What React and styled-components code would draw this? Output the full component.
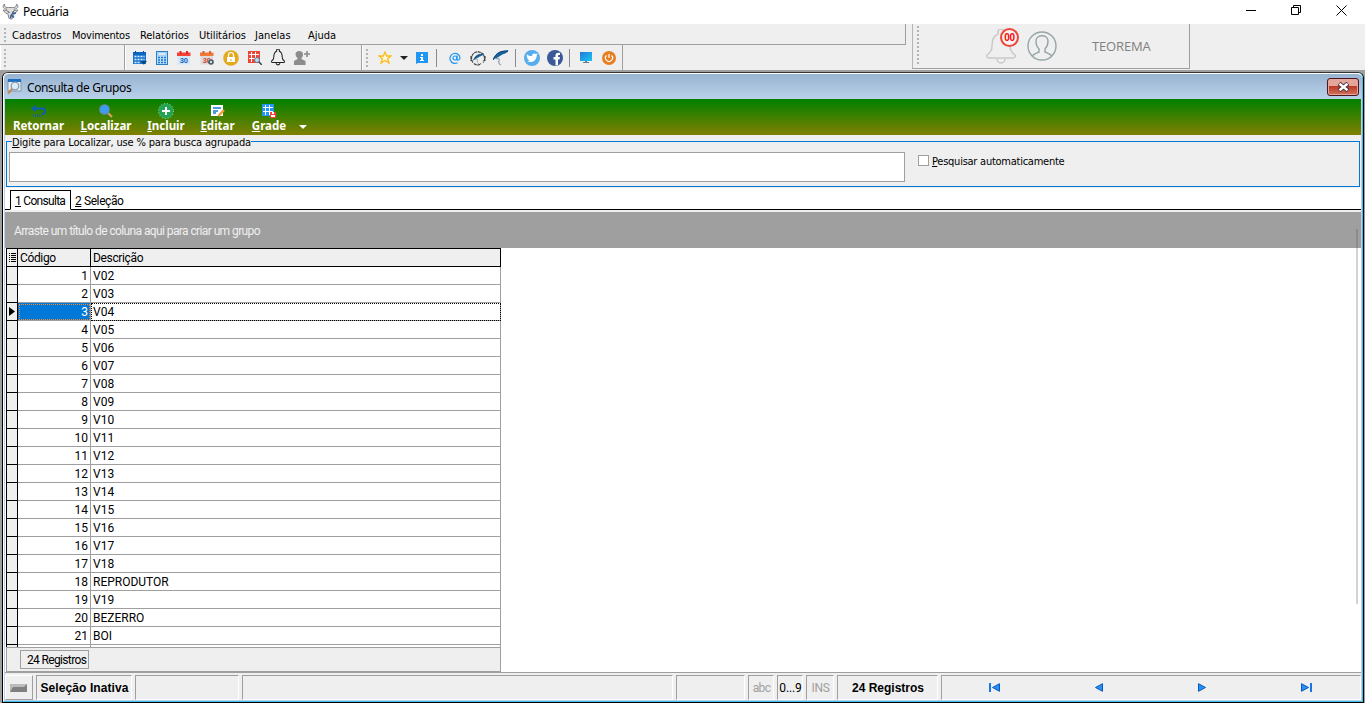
import styled, { createGlobalStyle } from "styled-components";

const GlobalStyle = createGlobalStyle`
    *{ box-sizing: border-box; }
    body{
        margin: 0;
        overflow: hidden;
        background: #9f9f9f;
        font-family: "DejaVu Sans Condensed", "DejaVu Sans", sans-serif;
        font-size: 11px;
        color: #000;
    }
    svg{ display: block; flex: none; }
    u{ text-underline-offset: 1px; text-decoration-thickness: 1px; }
`;

const Screen = styled.div`
    width: 1365px;
    height: 703px;
    display: flex;
    flex-direction: column;
    overflow: hidden;
`;

const Label = styled.span`
    font-family: ${props => props.$font || "inherit"};
    font-size: ${props => props.$size || 11}px;
    font-weight: ${props => props.$bold ? 700 : 400};
    letter-spacing: ${props => props.$track || 0}px;
    color: ${props => props.$color || "inherit"};
    white-space: nowrap;
`;

const TitleBar = styled.header`
    height: 24px;
    background: #fff;
    display: flex;
    align-items: center;
    padding: 0 18px 2px 2px;
    gap: 4px;
`;

const WindowButtons = styled.div`
    margin-left: auto;
    display: flex;
    gap: 34px;
    align-items: center;
    padding: 0 0 1px;
`;

const Docks = styled.div`
    height: 46px;
    flex: none;
    background: #efefef;
    display: flex;
`;

const LeftDock = styled.div`
    width: 906px;
`;

const MenuBar = styled.nav`
    height: 21px;
    display: flex;
    align-items: center;
    padding: 2px 0 0 4px;
    border-right: 1px solid #9f9f9f;
    border-bottom: 1px solid #9f9f9f;
`;

const Grip = styled.i`
    width: 2px;
    height: ${props => props.$height}px;
    flex: none;
    background: repeating-linear-gradient(#b4b4b4 0 2px, transparent 2px 4px);
`;

const MenuItem = styled.span`
    width: ${props => props.$width}px;
    padding-left: 6px;
    flex: none;
    white-space: nowrap;
    letter-spacing: ${props => props.$track || 0}px;
`;

const ToolRow = styled.div`
    height: 25px;
    display: flex;
`;

const ToolStrip = styled.div`
    width: ${props => props.$width}px;
    padding-left: ${props => props.$pad || 0}px;
    border-right: 1px solid #9f9f9f;
    border-left: 1px solid #fff;
    display: flex;
    align-items: center;
    gap: ${props => props.$gap || 0}px;
`;

const Separator = styled.i`
    width: 1px;
    height: 18px;
    background: #8a8a8a;
    margin: 0 ${props => props.$after}px 0 ${props => props.$before}px;
`;

const Space = styled.i`
    width: ${props => props.$width}px;
    flex: none;
`;

const UserDock = styled.div`
    width: 278px;
    height: 45px;
    margin-left: 6px;
    padding-left: 4px;
    display: flex;
    align-items: center;
    border: 1px solid #9f9f9f;
    border-top: 0;
    border-left-color: #b5b5b5;
`;

const BellBox = styled.div`
    position: relative;
    margin-left: 67px;
    padding-top: 2px;
`;

const Badge = styled.span`
    position: absolute;
    top: 1px;
    left: 14px;
    width: 19px;
    height: 19px;
    border: 2px solid #ef4638;
    border-radius: 50%;
    background: #f4f2f2;
    color: #f00;
    font: 700 10px/15px "Liberation Sans", sans-serif;
    letter-spacing: -0.4px;
    text-align: center;
`;

const Child = styled.main`
    height: 633px;
    border-top: 2px solid #9f9f9f;
    border-left: 2px solid #9f9f9f;
    border-right: 1px solid #9f9f9f;
    display: flex;
`;

const Frame = styled.div`
    flex: 1;
    min-width: 0;
    border: 1px solid #000;
    border-top-color: #333;
    border-radius: 6px 6px 0 0;
    background: #fff;
    display: flex;
`;

const Inner = styled.div`
    flex: 1;
    min-width: 0;
    border: solid #3ec0ea;
    border-width: 0 1px 1px 0;
    border-radius: 5px 5px 0 0;
    border-left: 1px solid #fff;
    padding: 0 1px 1px;
    background: #b9d1ea;
    display: flex;
    flex-direction: column;
`;

const ChildTitle = styled.div`
    height: 26px;
    flex: none;
    border-top: 1px solid #fff;
    border-radius: 5px 5px 0 0;
    margin: 0 -1px;
    background: linear-gradient(#99b4d1, #b9d1ea);
    display: flex;
    align-items: center;
    padding: 1px 3px 0;
    gap: 5px;
`;

const CloseButton = styled.button`
    width: 32px;
    height: 18px;
    margin-left: auto;
    padding: 0;
    border: 1px solid #4c1620;
    border-radius: 3px;
    box-shadow: inset 0 0 0 1px #e2a69b;
    background: linear-gradient(#e6a59b 0 45%, #b93a25 46%, #d4735e);
    display: grid;
    place-items: center;
`;

const ActionBar = styled.div`
    height: 36px;
    flex: none;
    background: linear-gradient(#008000, #808000);
    display: flex;
    color: #fff;
`;

const Action = styled.div`
    width: ${props => props.$width}px;
    display: flex;
    flex-direction: column;
    align-items: center;
    padding-top: 4px;
    font: 700 11.5px/14px "Noto Sans", sans-serif;
    white-space: nowrap;
    .icon{
        height: 16px;
        display: grid;
        place-items: center;
    }
`;

const SearchPane = styled.div`
    height: 53px;
    flex: none;
    background: #efefef;
    padding: 0 1px;
`;

const Group = styled.fieldset`
    height: 52px;
    margin: 0;
    padding: 0 2px;
    min-width: 0;
    border: 1px solid #0078d7;
    display: flex;
    gap: 13px;
`;

const Legend = styled.legend`
    padding: 0;
    margin-left: 3px;
    height: 13px;
    line-height: 15px;
    letter-spacing: -0.16px;
`;

const SearchInput = styled.input`
    width: 896px;
    height: 30px;
    margin-top: 4px;
    padding: 0 4px;
    border: 1px solid #9f9f9f;
    background: #fff;
`;

const Check = styled.label`
    display: flex;
    height: 13px;
    margin-top: 6px;
    gap: 3px;
    line-height: 15px;
    letter-spacing: -0.25px;
    white-space: nowrap;
    i{
        width: 11px;
        height: 11px;
        margin-top: 1px;
        border: 1px solid #9f9f9f;
        background: #fff;
    }
`;

const Tabs = styled.div`
    height: 22px;
    flex: none;
    background: #fff;
    border-bottom: 1px solid #000;
    display: flex;
    padding: 2px 0 0 5px;
    font-family: Roboto, sans-serif;
    font-size: 12px;
`;

const Tab = styled.div`
    height: 20px;
    line-height: ${props => props.$active ? 20 : 22}px;
    padding: 0 4px;
    letter-spacing: -0.4px;
    white-space: nowrap;
    ${props => props.$active && `
        width: 61px;
        border: 1px solid #000;
        border-bottom-color: #fff;
        letter-spacing: -0.7px;
    `}
`;

const Grid = styled.section`
    height: 463px;
    flex: none;
    position: relative;
    background: #fff;
    border-top: 2px solid #efefef;
    border-bottom: 1px solid #9f9f9f;
    font-family: Roboto, sans-serif;
    font-size: 12px;
`;

const GroupBy = styled.div`
    height: 36px;
    line-height: 38px;
    padding-left: 9px;
    background: #9f9f9f;
    color: #efefef;
    letter-spacing: -0.64px;
    word-spacing: 0.2px;
`;

const ScrollThumb = styled.i`
    position: absolute;
    right: 3px;
    top: 17px;
    width: 2px;
    height: 375px;
    background: rgba(80, 80, 80, 0.25);
`;

const Table = styled.div`
    width: 495px;
    margin-left: 1px;
    height: 399px;
    overflow: hidden;
`;

const Row = styled.div`
    height: 18px;
    display: grid;
    grid-template-columns: 12px 73px 1fr;
    grid-template-rows: 100%;
    line-height: 18px;
`;

const Indicator = styled.span`
    background: #efefef;
    border: solid #000;
    border-width: 0 1px 1px;
    display: grid;
    place-items: center;
`;

const HeadRow = styled(Row)`
    height: 19px;
    background: #efefef;
    border: solid #000;
    border-width: 1px 0;
    letter-spacing: -0.35px;
    >span{
        border-right: 1px solid #000;
        padding-left: 2px;
    }
    ${Indicator}{
        border-bottom: 0;
        padding: 0;
    }
`;

const Cell = styled.span`
    border: solid #9f9f9f;
    border-width: 0 1px 1px 0;
    padding: 0 2px;
    text-align: ${props => props.$right ? "right" : "left"};
    ${props => props.$selected && (props.$right
        ? "background: #0078d7; color: #fff; outline: 1px dotted #ff8728; outline-offset: -2px;"
        : "outline: 1px dotted #000; outline-offset: -1px;")}
`;

const Footer = styled.div`
    width: 495px;
    height: 25px;
    margin-left: 1px;
    background: #efefef;
    border: 1px solid #9f9f9f;
    padding: 2px 0 0 13px;
    >div{
        width: 69px;
        height: 19px;
        border: 1px solid #9f9f9f;
        line-height: 18px;
        padding-left: 6px;
        white-space: nowrap;
        letter-spacing: -0.65px;
    }
`;

const StatusBar = styled.footer`
    flex: 1;
    background: #efefef;
    display: flex;
    padding: 2px 0 0;
    gap: 3px;
`;

const Panel = styled.div`
    width: ${props => props.$width}px;
    height: 25px;
    flex: none;
    border: 1px solid #9f9f9f;
    border-right-color: #fff;
    border-bottom-color: #fff;
    padding-left: 1px;
    display: flex;
    align-items: center;
    justify-content: center;
`;

const RaisedPanel = styled(Panel)`
    border-color: #fff #9f9f9f #9f9f9f #fff;
    padding: 0 2px 0 0;
`;

const Navigator = styled(Panel)`
    flex: 1;
    justify-content: space-between;
    padding: 0 48px 0 47px;
`;

const BullIcon = () => (
    <svg width="17" height="17" viewBox="0 0 17 17" fill="#dedede" stroke="#858585" strokeWidth="1">
        <path d="M2.500 1C0 3 1 6 4.500 6L5 7.500 1 7 3.500 10 6 11 7 15.500 10 16 12 11.500 16 7 12 7.500 12.500 6C16 6 17 3 14.500 1 15 4 12 5 10.500 4.500L6.500 4.500C4.500 5 2 4 2.500 1Z" />
        <path d="M5.500 8.500l2 1M12 8.500l-2 1" stroke="#333" />
        <path d="M14 10c-4 0-5.500 2-5.500 5M9 12.500c2 0 2 1 3 2" stroke="#2d5f9c" strokeWidth="1.400" fill="none" />
    </svg>
);

const CalendarIcon = ({ top, body, corner }) => (
    <svg width="14" height="14" viewBox="0 0 14 14">
        <path d="M.5 3h12.500v10.500H.5z" fill={body} />
        <path d="M0 1.500h13.500V5H0z" fill={top} />
        <path d="M2.500 0h2v3h-2zM9 0h2v3H9z" fill={corner ? "#d0683a" : "#d32f2f"} />
        <text x="6.800" y="12" textAnchor="middle" fontSize="7.500" fontWeight="700" fontFamily="Liberation Sans" fill={corner ? "#d8452f" : "#1565c0"}>30</text>
        {corner && <circle cx="11" cy="11" r="2" fill="#ddd" stroke="#455a64" strokeWidth="1.6" />}
    </svg>
);

const DatesIcon = () => (
    <svg width="14" height="14" viewBox="0 0 14 14">
        <path d="M0 1h13v12H0z" fill="#1976d2" />
        <path d="M0 1h13v3H0z" fill="#0d66bd" />
        <path d="M2 0h1v2H2zM10 0h1v2h-1z" fill="#0d47a1" />
        <path d="M1.500 5.500h10M1.500 8.500h10M1.500 11.500h6" stroke="#dcecfb" strokeWidth="1.400" strokeDasharray="2 1" />
        <path d="M7.500 10H14l-3.200 3.800z" fill="#0d4475" />
    </svg>
);

const TableIcon = ({ color, children }) => (
    <svg width="14" height="14" viewBox="0 0 14 14">
        <path d="M0 0h12v12H0z" fill={color} />
        <path d="M1 3.500h10M1 7.500h10M3.500 1v10M7.500 1v10" stroke="#fff" strokeWidth="1" />
        {children}
    </svg>
);

const CalculatorIcon = () => (
    <svg width="12" height="14" viewBox="0 0 12 14">
        <rect x=".5" y=".5" width="11" height="13" fill="#bbdefb" stroke="#2a7fc4" />
        <path d="M2 2h8v2H2z" fill="#fff" stroke="#64a6d8" strokeWidth=".5" />
        <path d="M2 6.5h8M2 9h8M2 11.5h8" stroke="#1976d2" strokeWidth="1.4" strokeDasharray="2 1" />
    </svg>
);

const LockIcon = () => (
    <svg width="16" height="16" viewBox="0 0 16 16">
        <circle cx="8" cy="8" r="7.8" fill="#e5a91c" />
        <path d="M4 7h8v5H4z" fill="#fff" />
        <path d="M5.5 7V5a2.5 2.5 0 0 1 5 0v2" stroke="#fff" strokeWidth="1.2" fill="none" />
        <path d="M8 9v2" stroke="#e5a91c" />
    </svg>
);

const BellIcon = ({ size, color, stroke = 1 }) => (
    <svg width={size} height={size * 1.2} viewBox="0 0 30 36" fill="none" stroke={color} strokeWidth={stroke}>
        <path d="M12 5V3a3 3 0 0 1 6 0v2C23 7 24 11 24 17c0 5 2 7 5 9 1 1 0 3-2 3H3c-2 0-3-2-2-3 3-2 5-4 5-9 0-6 1-10 6-12z" />
        <path d="M11 30a4 4 0 0 0 8 0" />
    </svg>
);

const AddUserIcon = () => (
    <svg width="16" height="14" viewBox="0 0 16 14" fill="#8c8c8c">
        <path d="M1.500 3c0-4 7.500-4 7.500 0 0 2-.5 3-1.500 4v1l4 2v4H0v-4l3.500-2V7C2.500 6 1.500 5 1.500 3z" />
        <path d="M13 0v6M10 3h6" stroke="#8c8c8c" strokeWidth="1.6" />
    </svg>
);

const StarIcon = () => (
    <svg width="14" height="13" viewBox="0 0 14 13">
        <path d="M7 1l1.6 4H13L9.6 7.8 11 12 7 9.5 3 12l1.4-4.2L1 5h4.4z" fill="#fff8df" stroke="#fbbd1c" strokeWidth="1.3" />
    </svg>
);

const InfoIcon = () => (
    <svg width="12" height="12" viewBox="0 0 12 12">
        <path d="M0 0h12v11H2l-2 1z" fill="#2196f3" />
        <path d="M5 2h2v2H5zM4 5h3v3h1v1H4V8h1V6H4z" fill="#fff" />
    </svg>
);

const AtIcon = () => (
    <svg width="12" height="12" viewBox="0 0 12 12" fill="none" stroke="#2196f3" strokeWidth="1.2">
        <circle cx="6" cy="6" r="2" />
        <path d="M8 3.5V7c0 2 3 1 3-1A5 5 0 1 0 8.500 10.700" />
    </svg>
);

const SwooshIcon = ({ headset }) => (
    <svg width="16" height="16" viewBox="0 0 16 16" fill="none">
        {headset && <path d="M3 12.500A6.500 6.500 0 1 1 13 12.500M1 6v5M15 6v5M4 13.500c2 2 5 2 7 0" stroke="#444" strokeWidth="1.2" strokeDasharray="3 .5" />}
        <g transform={headset ? "translate(3.500 3.500) scale(.68)" : undefined}>
            <path d="M0 10C3 2 8 1 15.500 .500 14 4 10 3.500 7 6 4 8 3 8 0 10z" fill="#17629b" />
            <path d="M0 10C3 2 8 1 15 .800" stroke="#123d70" />
            <path d="M3 9c2-1 4-1 3 2-1 1 0 3 2 4" stroke="#8fa0b4" strokeWidth="1.3" />
        </g>
    </svg>
);

const TwitterIcon = () => (
    <svg width="16" height="16" viewBox="0 0 16 16">
        <circle cx="8" cy="8" r="8" fill="#55acee" />
        <path d="M3 4c1 2 3 2 5 2 0-3 3-3 4-2l2-.5-1.300 1.700C13 10 8 14 3 11c1.500 0 2-.4 2.500-1C4 10 3.500 9 3.400 8 3 7 2.500 6 3 4z" fill="#fff" />
    </svg>
);

const FacebookIcon = () => (
    <svg width="16" height="16" viewBox="0 0 16 16">
        <circle cx="8" cy="8" r="8" fill="#3b5998" />
        <path d="M8.500 15.500V9.500h-2V7h2V5.500c0-2 1.300-3 4.500-2.500v2c-1.700-.1-2 .2-2 .9V7h2l-.5 2.500H11V15z" fill="#fff" />
    </svg>
);

const MonitorIcon = () => (
    <svg width="12" height="12" viewBox="0 0 12 12">
        <defs>
            <linearGradient id="monitor" x2="1" y2="1">
                <stop stopColor="#2677dd" />
                <stop offset="1" stopColor="#19c7ee" />
            </linearGradient>
        </defs>
        <path d="M0 0h12v9H0z" fill="url(#monitor)" />
        <path d="M5 9h2v1h2v1H3v-1h2z" fill="#697c88" />
    </svg>
);

const PowerIcon = () => (
    <svg width="14" height="14" viewBox="0 0 14 14">
        <circle cx="7" cy="7" r="7" fill="#e67e22" />
        <path d="M4.500 4.500a3.500 3.500 0 1 0 5 0M7 3v4" stroke="#fff" strokeWidth="1.200" fill="none" />
    </svg>
);

const Caret = ({ color }) => (
    <svg width="8" height="4" viewBox="0 0 8 4">
        <path d="M0 0h8L4 4z" fill={color} />
    </svg>
);

const UserIcon = () => (
    <svg width="30" height="30" viewBox="0 0 30 30" fill="none" stroke="#95a5a6" strokeWidth="1.4">
        <circle cx="15" cy="15" r="14" />
        <path d="M5 25c2-2 5-3 7-4v-3c-2-2-3-5-3-8 0-7 12-7 12 0 0 3-1 6-3 8v3c2 1 5 2 7 4" />
    </svg>
);

const QueryIcon = () => (
    <svg width="15" height="16" viewBox="0 0 15 16">
        <path d="M1 1h13v11H1z" fill="#e8eef4" stroke="#7f97ad" />
        <path d="M1 0h13v3H1z" fill="#1f6fc0" />
        <path d="M5 10l-4 4.500" stroke="#c78753" strokeWidth="2.200" />
        <circle cx="8" cy="7" r="3.800" fill="#d9ecf8" stroke="#8a9cab" strokeWidth="1.300" />
    </svg>
);

const ReturnIcon = () => (
    <svg width="15" height="14" viewBox="0 0 15 14">
        <path d="M0 4.500L4.500 1v7z" fill="#0d5cb8" />
        <path d="M4 4.500h7c2 0 3 1 3 2.500 0 2-1 3-3 3" fill="none" stroke="#0d5cb8" strokeWidth="1.800" />
        <path d="M2 11.500h9" stroke="#0d5cb8" strokeWidth="3" strokeDasharray="1 1" opacity=".7" />
    </svg>
);

const FindIcon = () => (
    <svg width="14" height="14" viewBox="0 0 14 14">
        <path d="M9 9l4 4" stroke="#d9a060" strokeWidth="2.200" />
        <circle cx="5.500" cy="5.500" r="4.500" fill="#3b9cf2" stroke="#5b8fc0" strokeWidth="1.500" />
    </svg>
);

const AddIcon = () => (
    <svg width="16" height="16" viewBox="0 0 16 16">
        <circle cx="8" cy="8" r="7.500" fill="#23a455" stroke="#d0f0d8" strokeWidth=".8" strokeDasharray="1 2" />
        <path d="M8 4v8M4 8h8" stroke="#fff" strokeWidth="2" />
    </svg>
);

const EditIcon = () => (
    <svg width="14" height="14" viewBox="0 0 14 14">
        <path d="M0 1h12v11H0z" fill="#fff" />
        <path d="M2 4h8M2 7h5M2 9h3" stroke="#1976d2" strokeWidth="1.300" />
        <path d="M13 6l-5.500 6" stroke="#f39c3a" strokeWidth="2.400" />
    </svg>
);

const GradeIcon = () => (
    <TableIcon color="#2196f3">
        <path d="M8 8h6v6H8z" fill="#f44336" />
        <path d="M10 8h2v2h-2zM9 11h4v2H9z" fill="#fff" />
    </TableIcon>
);

const NavIcon = ({ flip, bar }) => (
    <svg width={bar ? 11 : 9} height="9" viewBox={bar ? "0 0 11 9" : "2 0 9 9"}>
        <g transform={flip ? (bar ? "translate(11) scale(-1 1)" : "translate(13) scale(-1 1)") : undefined}>
            {bar && <path d="M0 0h2v9H0z" fill="#1477ea" />}
            <path d="M10.500 .700v7.600L3.500 4.500z" fill="#2591f5" stroke="#0758bd" />
        </g>
    </svg>
);

const MENU = [
    ["Cadastros", 60, 0],
    ["Movimentos", 68, -0.25],
    ["Relatórios", 59, -0.05],
    ["Utilitários", 56, -0.05],
    ["Janelas", 53, 0.05],
    ["Ajuda", 50, 0],
];

const ACTIONS = [
    ["", "Retornar", 67, <ReturnIcon />],
    ["L", "ocalizar", 68, <FindIcon />],
    ["I", "ncluir", 52, <AddIcon />],
    ["E", "ditar", 51, <EditIcon />],
    ["G", "rade", 52, <GradeIcon />],
];

const GROUPS = [
    "V02", "V03", "V04", "V05", "V06", "V07", "V08", "V09", "V10", "V11", "V12",
    "V13", "V14", "V15", "V16", "V17", "V18", "REPRODUTOR", "V19", "BEZERRO", "BOI", "",
];

const TITLE_FONT = '"Noto Sans", sans-serif';
const GRID_FONT = "Roboto, sans-serif";
const BOLD_FONT = '"Liberation Sans", sans-serif';

export default function App() {
    return (
        <Screen>
            <GlobalStyle />
            <TitleBar>
                <BullIcon />
                <Label $font={TITLE_FONT} $size={12} $track={-0.4}>Pecuária</Label>
                <WindowButtons>
                    <svg width="11" height="11" stroke="#000"><path d="M0 5.500h10" /></svg>
                    <svg width="11" height="11" stroke="#000" fill="none"><path d="M.5 2.500h7v7h-7zM2.500 2.500v-2h7v7h-2" /></svg>
                    <svg width="11" height="11" stroke="#000"><path d="M.5.5l10 10M10.500.5l-10 10" /></svg>
                </WindowButtons>
            </TitleBar>
            <Docks>
                <LeftDock>
                    <MenuBar>
                        <Grip $height={14} />
                        {MENU.map(([name, width, track]) => <MenuItem key={name} $width={width} $track={track}>{name}</MenuItem>)}
                    </MenuBar>
                    <ToolRow>
                        <ToolStrip $width={125} $pad={3}><Grip $height={18} /></ToolStrip>
                        <ToolStrip $width={237} $pad={7} $gap={9}>
                            <DatesIcon />
                            <CalculatorIcon />
                            <CalendarIcon top="#f44336" body="#d5e8fb" />
                            <CalendarIcon top="#f27935" body="#dcdcdc" corner />
                            <LockIcon />
                            <TableIcon color="#ef4438">
                                <circle cx="9" cy="9" r="2.500" fill="#b9dcf4" stroke="#678" />
                                <path d="M11 11l3 3" stroke="#345" strokeWidth="1.500" />
                            </TableIcon>
                            <BellIcon size={14} color="#222" stroke={2.2} />
                            <AddUserIcon />
                        </ToolStrip>
                        <ToolStrip $width={261} $pad={3}>
                            <Grip $height={18} />
                            <Space $width={10} />
                            <StarIcon />
                            <Space $width={8} />
                            <Caret color="#222" />
                            <Space $width={8} />
                            <InfoIcon />
                            <Separator $before={8} $after={12} />
                            <AtIcon />
                            <Space $width={9} />
                            <SwooshIcon headset />
                            <Space $width={7} />
                            <SwooshIcon />
                            <Separator $before={6} $after={8} />
                            <TwitterIcon />
                            <Space $width={7} />
                            <FacebookIcon />
                            <Separator $before={6} $after={10} />
                            <MonitorIcon />
                            <Space $width={10} />
                            <PowerIcon />
                        </ToolStrip>
                    </ToolRow>
                </LeftDock>
                <UserDock>
                    <Grip $height={40} />
                    <BellBox>
                        <BellIcon size={30} color="#c9c9c9" stroke={1.5} />
                        <Badge>00</Badge>
                    </BellBox>
                    <Space $width={11} />
                    <UserIcon />
                    <Space $width={35} />
                    <Label $font='"Open Sans", sans-serif' $size={13} $color="#808080" $track={-0.15}>TEOREMA</Label>
                </UserDock>
            </Docks>
            <Child>
                <Frame>
                    <Inner>
                        <ChildTitle>
                            <QueryIcon />
                            <Label $font={TITLE_FONT} $size={12} $track={-0.4}>Consulta de Grupos</Label>
                            <CloseButton>
                                <svg width="13" height="10" viewBox="0 0 13 10">
                                    <path d="M2 1.500l9 7M11 1.500l-9 7" stroke="#46303a" strokeWidth="4.400" />
                                    <path d="M2.500 1.800l8 6.400M10.500 1.800l-8 6.400" stroke="#fff" strokeWidth="2.400" />
                                </svg>
                            </CloseButton>
                        </ChildTitle>
                        <ActionBar>
                            {ACTIONS.map(([key, rest, width, icon]) => (
                                <Action key={rest} $width={width}>
                                    <span className="icon">{icon}</span>
                                    <span>{key && <u>{key}</u>}{rest}</span>
                                </Action>
                            ))}
                            <Action $width={15}>
                                <span className="icon" />
                                <span className="icon"><Caret color="#fff" /></span>
                            </Action>
                        </ActionBar>
                        <SearchPane>
                            <Group>
                                <Legend><u>D</u>igite para Localizar, use % para busca agrupada</Legend>
                                <SearchInput />
                                <Check><i /><span><u>P</u>esquisar automaticamente</span></Check>
                            </Group>
                        </SearchPane>
                        <Tabs>
                            <Tab $active><u>1</u> Consulta</Tab>
                            <Tab><u>2</u> Seleção</Tab>
                        </Tabs>
                        <Grid>
                            <GroupBy>Arraste um título de coluna aqui para criar um grupo</GroupBy>
                            <ScrollThumb />
                            <Table>
                                <HeadRow>
                                    <Indicator>
                                        <svg width="7" height="9" stroke="#000"><path d="M0 .5h1M0 2.500h1M0 4.500h1M0 6.500h1M0 8.500h1M2 .5h5M2 2.500h5M2 4.500h5M2 6.500h5M2 8.500h5" /></svg>
                                    </Indicator>
                                    <span>Código</span>
                                    <span>Descrição</span>
                                </HeadRow>
                                {GROUPS.map((name, i) => (
                                    <Row key={i}>
                                        <Indicator>{i === 2 && <svg width="6" height="9"><path d="M0 0v9l6-4.500z" /></svg>}</Indicator>
                                        <Cell $right $selected={i === 2}>{name && i + 1}</Cell>
                                        <Cell $selected={i === 2}>{name}</Cell>
                                    </Row>
                                ))}
                            </Table>
                            <Footer><div>24 Registros</div></Footer>
                        </Grid>
                        <StatusBar>
                            <RaisedPanel $width={28}>
                                <svg width="17" height="8"><path d="M0 0h17v8H0z" fill="#808080" /><path d="M0 0h17l-3 3H3L0 8z" fill="#bbb" /></svg>
                            </RaisedPanel>
                            <Panel $width={96}><Label $font={BOLD_FONT} $size={12} $bold $track={0.1}>Seleção Inativa</Label></Panel>
                            <Panel $width={104} />
                            <Panel $width={431} />
                            <Panel $width={69} />
                            <Panel $width={26}><Label $font={GRID_FONT} $size={12} $color="#9f9f9f" $track={-0.6}>abc</Label></Panel>
                            <Panel $width={26}><Label $font={GRID_FONT} $size={12} $track={-0.1}>0...9</Label></Panel>
                            <Panel $width={28}><Label $font={GRID_FONT} $size={12} $color="#9f9f9f" $track={-0.3}>INS</Label></Panel>
                            <Panel $width={101}><Label $font={BOLD_FONT} $size={12} $bold>24 Registros</Label></Panel>
                            <Navigator>
                                <NavIcon bar />
                                <NavIcon />
                                <NavIcon flip />
                                <NavIcon flip bar />
                            </Navigator>
                        </StatusBar>
                    </Inner>
                </Frame>
            </Child>
        </Screen>
    );
}
